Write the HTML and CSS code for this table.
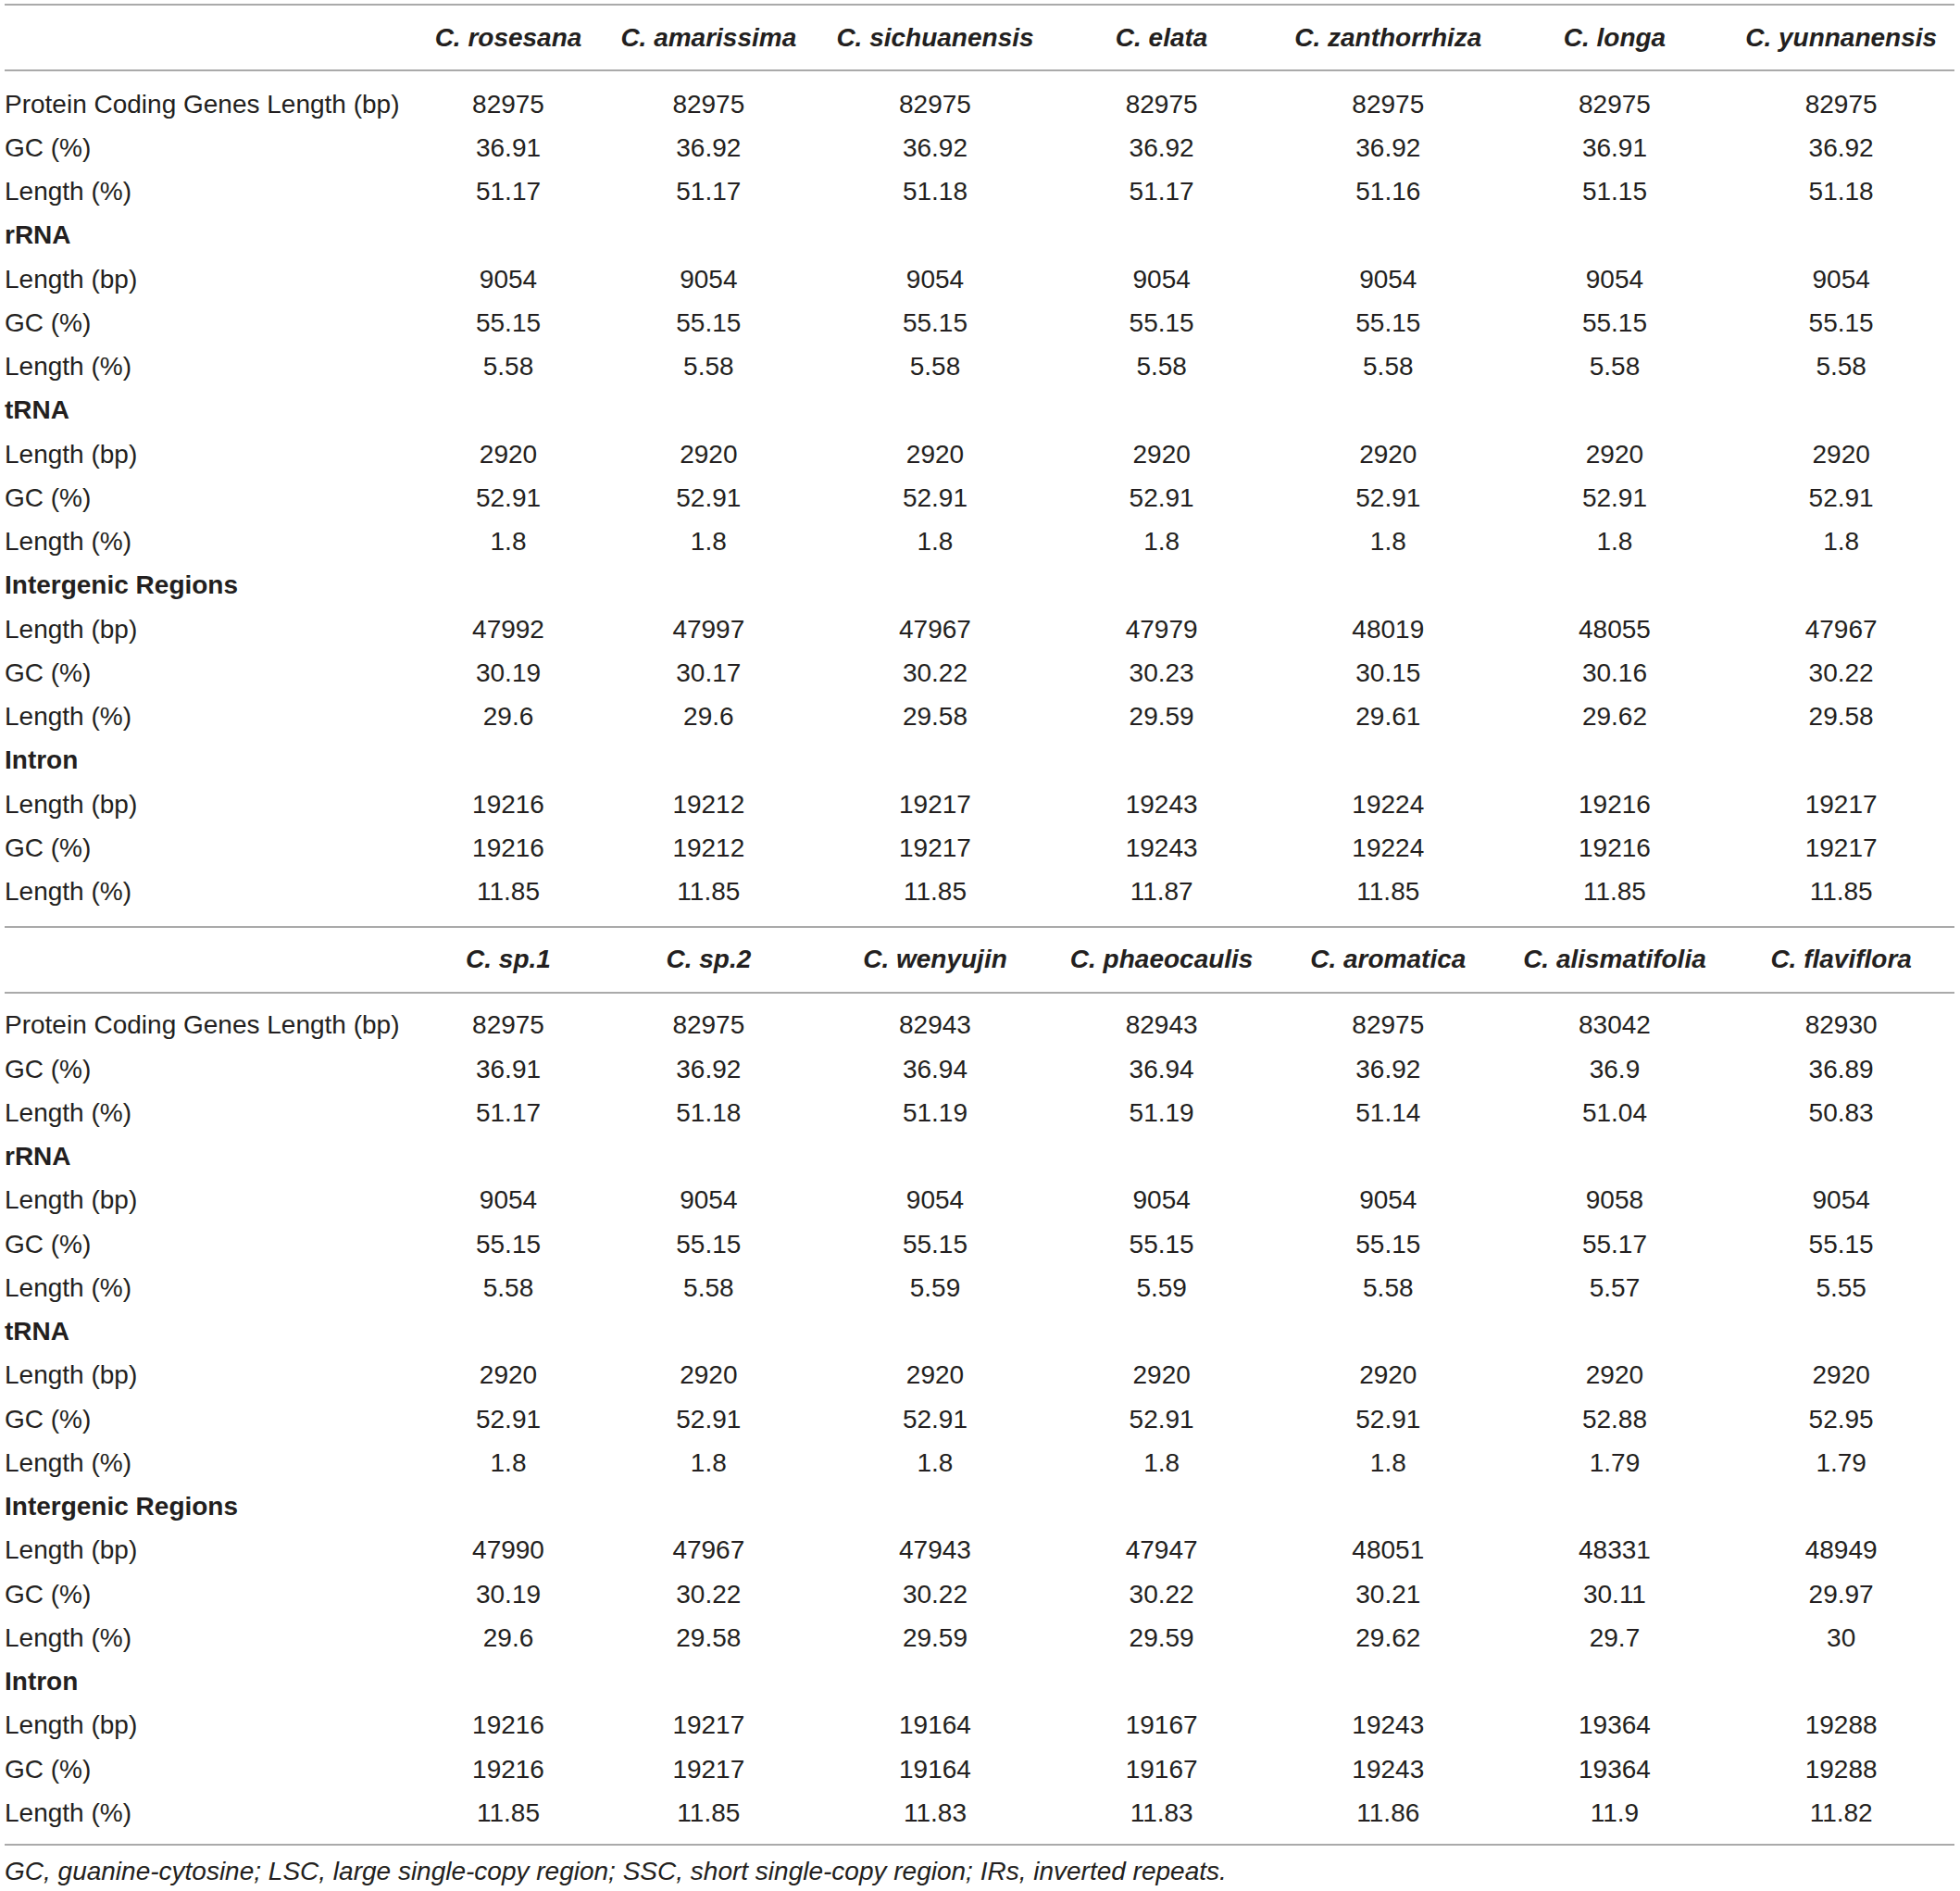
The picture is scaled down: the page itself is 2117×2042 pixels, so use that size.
FILE: index.html
```html
<html>
  <head>
    <meta charset="utf-8">
    <title>Curcuma chloroplast genome features</title>
    <link rel="stylesheet" href="styles.css">
  </head>
  <body>
    <table class="genes">
      <colgroup>
        <col class="label">
        <col class="first">
        <col><col><col><col><col><col>
      </colgroup>
      <tr class="head">
        <th></th><th>C. rosesana</th><th>C. amarissima</th><th>C. sichuanensis</th><th>C. elata</th><th>C. zanthorrhiza</th><th>C. longa</th><th>C. yunnanensis</th>
      </tr>
      <tr class="gap top"><td colspan="8"></td></tr>
      <tr><td class="name">Protein Coding Genes Length (bp)</td><td>82975</td><td>82975</td><td>82975</td><td>82975</td><td>82975</td><td>82975</td><td>82975</td></tr>
      <tr><td class="name">GC (%)</td><td>36.91</td><td>36.92</td><td>36.92</td><td>36.92</td><td>36.92</td><td>36.91</td><td>36.92</td></tr>
      <tr><td class="name">Length (%)</td><td>51.17</td><td>51.17</td><td>51.18</td><td>51.17</td><td>51.16</td><td>51.15</td><td>51.18</td></tr>
      <tr><td class="name group" colspan="8">rRNA</td></tr>
      <tr><td class="name">Length (bp)</td><td>9054</td><td>9054</td><td>9054</td><td>9054</td><td>9054</td><td>9054</td><td>9054</td></tr>
      <tr><td class="name">GC (%)</td><td>55.15</td><td>55.15</td><td>55.15</td><td>55.15</td><td>55.15</td><td>55.15</td><td>55.15</td></tr>
      <tr><td class="name">Length (%)</td><td>5.58</td><td>5.58</td><td>5.58</td><td>5.58</td><td>5.58</td><td>5.58</td><td>5.58</td></tr>
      <tr><td class="name group" colspan="8">tRNA</td></tr>
      <tr><td class="name">Length (bp)</td><td>2920</td><td>2920</td><td>2920</td><td>2920</td><td>2920</td><td>2920</td><td>2920</td></tr>
      <tr><td class="name">GC (%)</td><td>52.91</td><td>52.91</td><td>52.91</td><td>52.91</td><td>52.91</td><td>52.91</td><td>52.91</td></tr>
      <tr><td class="name">Length (%)</td><td>1.8</td><td>1.8</td><td>1.8</td><td>1.8</td><td>1.8</td><td>1.8</td><td>1.8</td></tr>
      <tr><td class="name group" colspan="8">Intergenic Regions</td></tr>
      <tr><td class="name">Length (bp)</td><td>47992</td><td>47997</td><td>47967</td><td>47979</td><td>48019</td><td>48055</td><td>47967</td></tr>
      <tr><td class="name">GC (%)</td><td>30.19</td><td>30.17</td><td>30.22</td><td>30.23</td><td>30.15</td><td>30.16</td><td>30.22</td></tr>
      <tr><td class="name">Length (%)</td><td>29.6</td><td>29.6</td><td>29.58</td><td>29.59</td><td>29.61</td><td>29.62</td><td>29.58</td></tr>
      <tr><td class="name group" colspan="8">Intron</td></tr>
      <tr><td class="name">Length (bp)</td><td>19216</td><td>19212</td><td>19217</td><td>19243</td><td>19224</td><td>19216</td><td>19217</td></tr>
      <tr><td class="name">GC (%)</td><td>19216</td><td>19212</td><td>19217</td><td>19243</td><td>19224</td><td>19216</td><td>19217</td></tr>
      <tr><td class="name">Length (%)</td><td>11.85</td><td>11.85</td><td>11.85</td><td>11.87</td><td>11.85</td><td>11.85</td><td>11.85</td></tr>
      <tr class="gap bottom"><td colspan="8"></td></tr>

      <tr class="head">
        <th></th><th>C. sp.1</th><th>C. sp.2</th><th>C. wenyujin</th><th>C. phaeocaulis</th><th>C. aromatica</th><th>C. alismatifolia</th><th>C. flaviflora</th>
      </tr>
      <tr class="gap top second"><td colspan="8"></td></tr>
      <tr><td class="name">Protein Coding Genes Length (bp)</td><td>82975</td><td>82975</td><td>82943</td><td>82943</td><td>82975</td><td>83042</td><td>82930</td></tr>
      <tr><td class="name">GC (%)</td><td>36.91</td><td>36.92</td><td>36.94</td><td>36.94</td><td>36.92</td><td>36.9</td><td>36.89</td></tr>
      <tr><td class="name">Length (%)</td><td>51.17</td><td>51.18</td><td>51.19</td><td>51.19</td><td>51.14</td><td>51.04</td><td>50.83</td></tr>
      <tr><td class="name group" colspan="8">rRNA</td></tr>
      <tr><td class="name">Length (bp)</td><td>9054</td><td>9054</td><td>9054</td><td>9054</td><td>9054</td><td>9058</td><td>9054</td></tr>
      <tr><td class="name">GC (%)</td><td>55.15</td><td>55.15</td><td>55.15</td><td>55.15</td><td>55.15</td><td>55.17</td><td>55.15</td></tr>
      <tr><td class="name">Length (%)</td><td>5.58</td><td>5.58</td><td>5.59</td><td>5.59</td><td>5.58</td><td>5.57</td><td>5.55</td></tr>
      <tr><td class="name group" colspan="8">tRNA</td></tr>
      <tr><td class="name">Length (bp)</td><td>2920</td><td>2920</td><td>2920</td><td>2920</td><td>2920</td><td>2920</td><td>2920</td></tr>
      <tr><td class="name">GC (%)</td><td>52.91</td><td>52.91</td><td>52.91</td><td>52.91</td><td>52.91</td><td>52.88</td><td>52.95</td></tr>
      <tr><td class="name">Length (%)</td><td>1.8</td><td>1.8</td><td>1.8</td><td>1.8</td><td>1.8</td><td>1.79</td><td>1.79</td></tr>
      <tr><td class="name group" colspan="8">Intergenic Regions</td></tr>
      <tr><td class="name">Length (bp)</td><td>47990</td><td>47967</td><td>47943</td><td>47947</td><td>48051</td><td>48331</td><td>48949</td></tr>
      <tr><td class="name">GC (%)</td><td>30.19</td><td>30.22</td><td>30.22</td><td>30.22</td><td>30.21</td><td>30.11</td><td>29.97</td></tr>
      <tr><td class="name">Length (%)</td><td>29.6</td><td>29.58</td><td>29.59</td><td>29.59</td><td>29.62</td><td>29.7</td><td>30</td></tr>
      <tr><td class="name group" colspan="8">Intron</td></tr>
      <tr><td class="name">Length (bp)</td><td>19216</td><td>19217</td><td>19164</td><td>19167</td><td>19243</td><td>19364</td><td>19288</td></tr>
      <tr><td class="name">GC (%)</td><td>19216</td><td>19217</td><td>19164</td><td>19167</td><td>19243</td><td>19364</td><td>19288</td></tr>
      <tr><td class="name">Length (%)</td><td>11.85</td><td>11.85</td><td>11.83</td><td>11.83</td><td>11.86</td><td>11.9</td><td>11.82</td></tr>
      <tr class="gap bottom last"><td colspan="8"></td></tr>
    </table>
    <p class="note">GC, guanine-cytosine; LSC, large single-copy region; SSC, short single-copy region; IRs, inverted repeats.</p>
  </body>
</html>
```

FILE: styles.css
```css
body {
  margin: 0;
  padding: 4px 6px 0 5px;
  font-family: "Liberation Sans", Arial, sans-serif;
  color: #231f20;
  background: #fff;
}

.genes {
  width: 2106px;
  border-collapse: collapse;
  table-layout: fixed;
  font-size: 28px;
}
.genes col.label {
  width: 450px;
}
.genes col.first {
  width: 188px;
}

.genes td {
  padding: 0;
  height: 47.25px;
  line-height: 47.25px;
  text-align: center;
  white-space: nowrap;
}
.genes td.name {
  text-align: left;
}
.genes td.group {
  font-weight: bold;
}

.genes tr.head th {
  height: 71px;
  padding: 0;
  border-top: 2px solid #aaa;
  border-bottom: 2px solid #aaa;
  font-style: italic;
  font-weight: bold;
  text-align: center;
  white-space: nowrap;
}

.genes tr.gap td {
  line-height: 0;
}
.genes tr.top td {
  height: 12.5px;
}
.genes tr.top.second td {
  height: 11.5px;
}
.genes tr.bottom td {
  height: 14.5px;
}
.genes tr.last td {
  height: 11px;
  border-bottom: 2px solid #aaa;
}

.note {
  margin: 0;
  padding-top: 8px;
  font-size: 28px;
  line-height: 40px;
  font-style: italic;
}
```
